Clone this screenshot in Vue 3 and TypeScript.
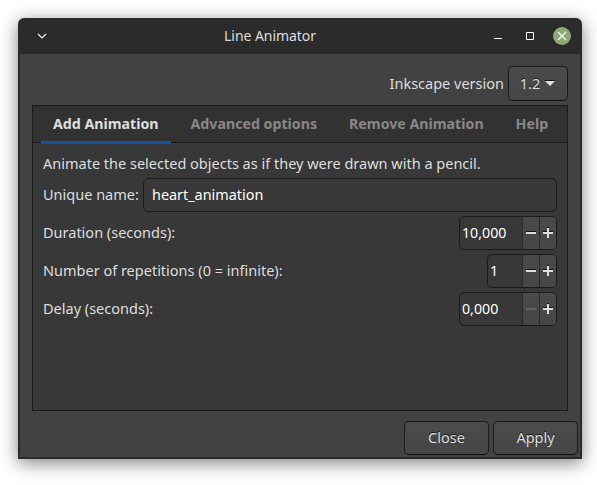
<script setup lang="ts">
import { ref } from 'vue'

interface SpinField {
  label: string
  value: string
  narrow: boolean
  atMinimum: boolean
}

const tabs: string[] = ['Add Animation', 'Advanced options', 'Remove Animation', 'Help']
const activeTab = ref(0)
const animationName = ref('heart_animation')

const fields: SpinField[] = [
  { label: 'Duration (seconds):', value: '10,000', narrow: false, atMinimum: false },
  { label: 'Number of repetitions (0 = infinite):', value: '1', narrow: true, atMinimum: false },
  { label: 'Delay (seconds):', value: '0,000', narrow: false, atMinimum: true },
]
</script>

<template>
  <div class="desktop">
    <div class="window">
      <header class="titlebar">
        <svg class="menu" width="12" height="12" viewBox="0 0 12 12">
          <path d="M2 4 L6 8 L10 4" fill="none" stroke="#f0f0f0" stroke-width="1.2" />
        </svg>
        <span class="title">Line Animator</span>
        <div class="controls">
          <svg width="8" height="8" viewBox="0 0 8 8"><path d="M0 6h8v1H0z" fill="#fff" /></svg>
          <svg class="maximize" width="8" height="8" viewBox="0 0 8 8"><path d="M.5 .5h7v7h-7z" fill="none" stroke="#fff" /></svg>
          <svg width="18" height="18" viewBox="0 0 18 18">
            <circle cx="9" cy="9" r="9" fill="#8fa876" />
            <path d="M5 5l8 8M13 5l-8 8" stroke="#fff" stroke-width="1.1" />
          </svg>
        </div>
      </header>

      <main class="body">
        <div class="version">
          <span class="version-label">Inkscape version</span>
          <button class="btn combo">
            <span>1.2</span>
            <svg width="10" height="6" viewBox="0 0 10 6">
              <path d="M0 0h10v1H0z" fill="#151515" />
              <path d="M0 1h10L5 6z" fill="#dedede" />
            </svg>
          </button>
        </div>

        <section class="notebook">
          <nav class="tabs">
            <div
              v-for="(tab, i) in tabs"
              :key="tab"
              class="tab"
              :class="{ active: i === activeTab }"
              @click="activeTab = i"
            >{{ tab }}</div>
          </nav>
          <div class="page">
            <p class="intro">Animate the selected objects as if they were drawn with a pencil.</p>
            <div class="row">
              <span class="name-label">Unique name:</span>
              <input v-model="animationName" class="entry" type="text" spellcheck="false" />
            </div>
            <div v-for="f in fields" :key="f.label" class="row">
              <span class="label">{{ f.label }}</span>
              <div class="spin" :class="{ narrow: f.narrow }">
                <span class="value">{{ f.value }}</span>
                <span class="step" :class="{ off: f.atMinimum }">
                  <svg width="10" height="10" viewBox="0 0 10 10">
                    <path v-if="!f.atMinimum" d="M0 3h10v1H0z" fill="#111" />
                    <path class="sign" d="M0 4h10v2H0z" />
                  </svg>
                </span>
                <span class="step">
                  <svg width="10" height="10" viewBox="0 0 10 10">
                    <path d="M0 3h10v1H0zM4 -1h2v1H4z" fill="#111" />
                    <path class="sign" d="M0 4h4V0h2v4h4v2H6v4H4V6H0z" />
                  </svg>
                </span>
              </div>
            </div>
          </div>
        </section>

        <footer class="actions">
          <button class="btn">Close</button>
          <button class="btn">Apply</button>
        </footer>
      </main>
    </div>
  </div>
</template>

<style>
body {
  margin: 0;
  background: #fff;
  overflow: hidden;
}
</style>

<style scoped>
* {
  box-sizing: border-box;
}
.desktop {
  width: 597px;
  height: 485px;
  padding: 18px 15px 26px 18px;
  font: 14.5px/20px "Noto Sans", sans-serif;
  color: #dedede;
}
.window {
  width: 564px;
  height: 441px;
  display: flex;
  flex-direction: column;
  background: #2b2b2b;
  border-radius: 6px 6px 0 0;
  box-shadow: 0 4px 18px rgba(0, 0, 0, 0.5);
}
.titlebar {
  height: 36px;
  flex: none;
  display: grid;
  grid-template-columns: 83px 1fr 94px;
  align-items: center;
}
.menu {
  margin-left: 18px;
}
.title {
  padding: 0 49px 0 0;
  text-align: center;
  font-size: 14px;
  letter-spacing: -0.06px;
}
.controls {
  display: flex;
  align-items: center;
  justify-content: flex-end;
  margin-right: 11px;
}
.maximize {
  margin: 0 19px 0 24px;
}
.body {
  flex: 1;
  margin: 0 2px 2px;
  padding: 12px 2px 2px 12px;
  background: #424242;
  display: flex;
  flex-direction: column;
}
.version {
  display: flex;
  justify-content: flex-end;
  align-items: center;
  gap: 4px;
  height: 35px;
  margin-right: 10px;
}
.version-label {
  padding-bottom: 1px;
}
.btn {
  width: 85px;
  height: 34px;
  padding: 0 0 2px;
  border: 1px solid #1b1b1b;
  border-bottom-color: #101010;
  border-radius: 5px;
  background: linear-gradient(#4b4b4b, #464646);
  color: #dedede;
  font: inherit;
  text-shadow: 0 -1px #161616;
}
.combo {
  width: 60px;
  height: 35px;
  padding: 0 1px 1px 0;
  display: flex;
  align-items: center;
  justify-content: center;
  gap: 5px;
}
.notebook {
  width: 536px;
  height: 306px;
  margin-top: 4px;
  border: 1px solid #1b1b1b;
  background: #383838;
}
.tabs {
  height: 37px;
  display: flex;
  gap: 8px;
  padding-left: 8px;
  background: #323232;
  border-bottom: 1px solid #1b1b1b;
}
.tab {
  height: 37px;
  padding: 8px 12px 0;
  font-size: 14.2px;
  font-weight: 700;
  color: #888886;
  white-space: nowrap;
}
.tab.active {
  height: 38px;
  color: #dedede;
  border-bottom: 3px solid #1553a0;
}
.page {
  padding: 10px 10px;
}
.intro {
  margin: 0 0 5px;
  height: 20px;
  white-space: nowrap;
}
.row {
  height: 34px;
  margin-bottom: 4px;
  display: flex;
  align-items: center;
}
.name-label {
  width: 100px;
  padding-bottom: 2px;
  white-space: nowrap;
}
.label {
  flex: 1;
  padding-bottom: 2px;
}
.entry {
  flex: 1;
  height: 34px;
  padding: 0 8px 2px;
  border: 1px solid #1b1b1b;
  border-radius: 5px;
  background: #383838;
  color: #fff;
  font: inherit;
  font-size: 14.4px;
  outline: none;
}
.spin {
  width: 98px;
  height: 34px;
  display: flex;
  align-items: stretch;
  border: 1px solid #1b1b1b;
  border-radius: 5px;
  overflow: hidden;
  color: #fff;
}
.spin.narrow {
  width: 70px;
}
.value {
  flex: 1;
  padding: 6px 0 0 2px;
  font-size: 14.2px;
}
.step {
  width: 17px;
  border-left: 1px solid #2b2b2b;
  background: linear-gradient(#4a4a4a, #464646);
  display: flex;
  align-items: center;
  justify-content: center;
}
.step svg {
  overflow: visible;
}
.sign {
  fill: #dedede;
}
.off .sign {
  fill: #626262;
}
.actions {
  display: flex;
  justify-content: flex-end;
  gap: 4px;
  margin-top: 10px;
}
</style>
